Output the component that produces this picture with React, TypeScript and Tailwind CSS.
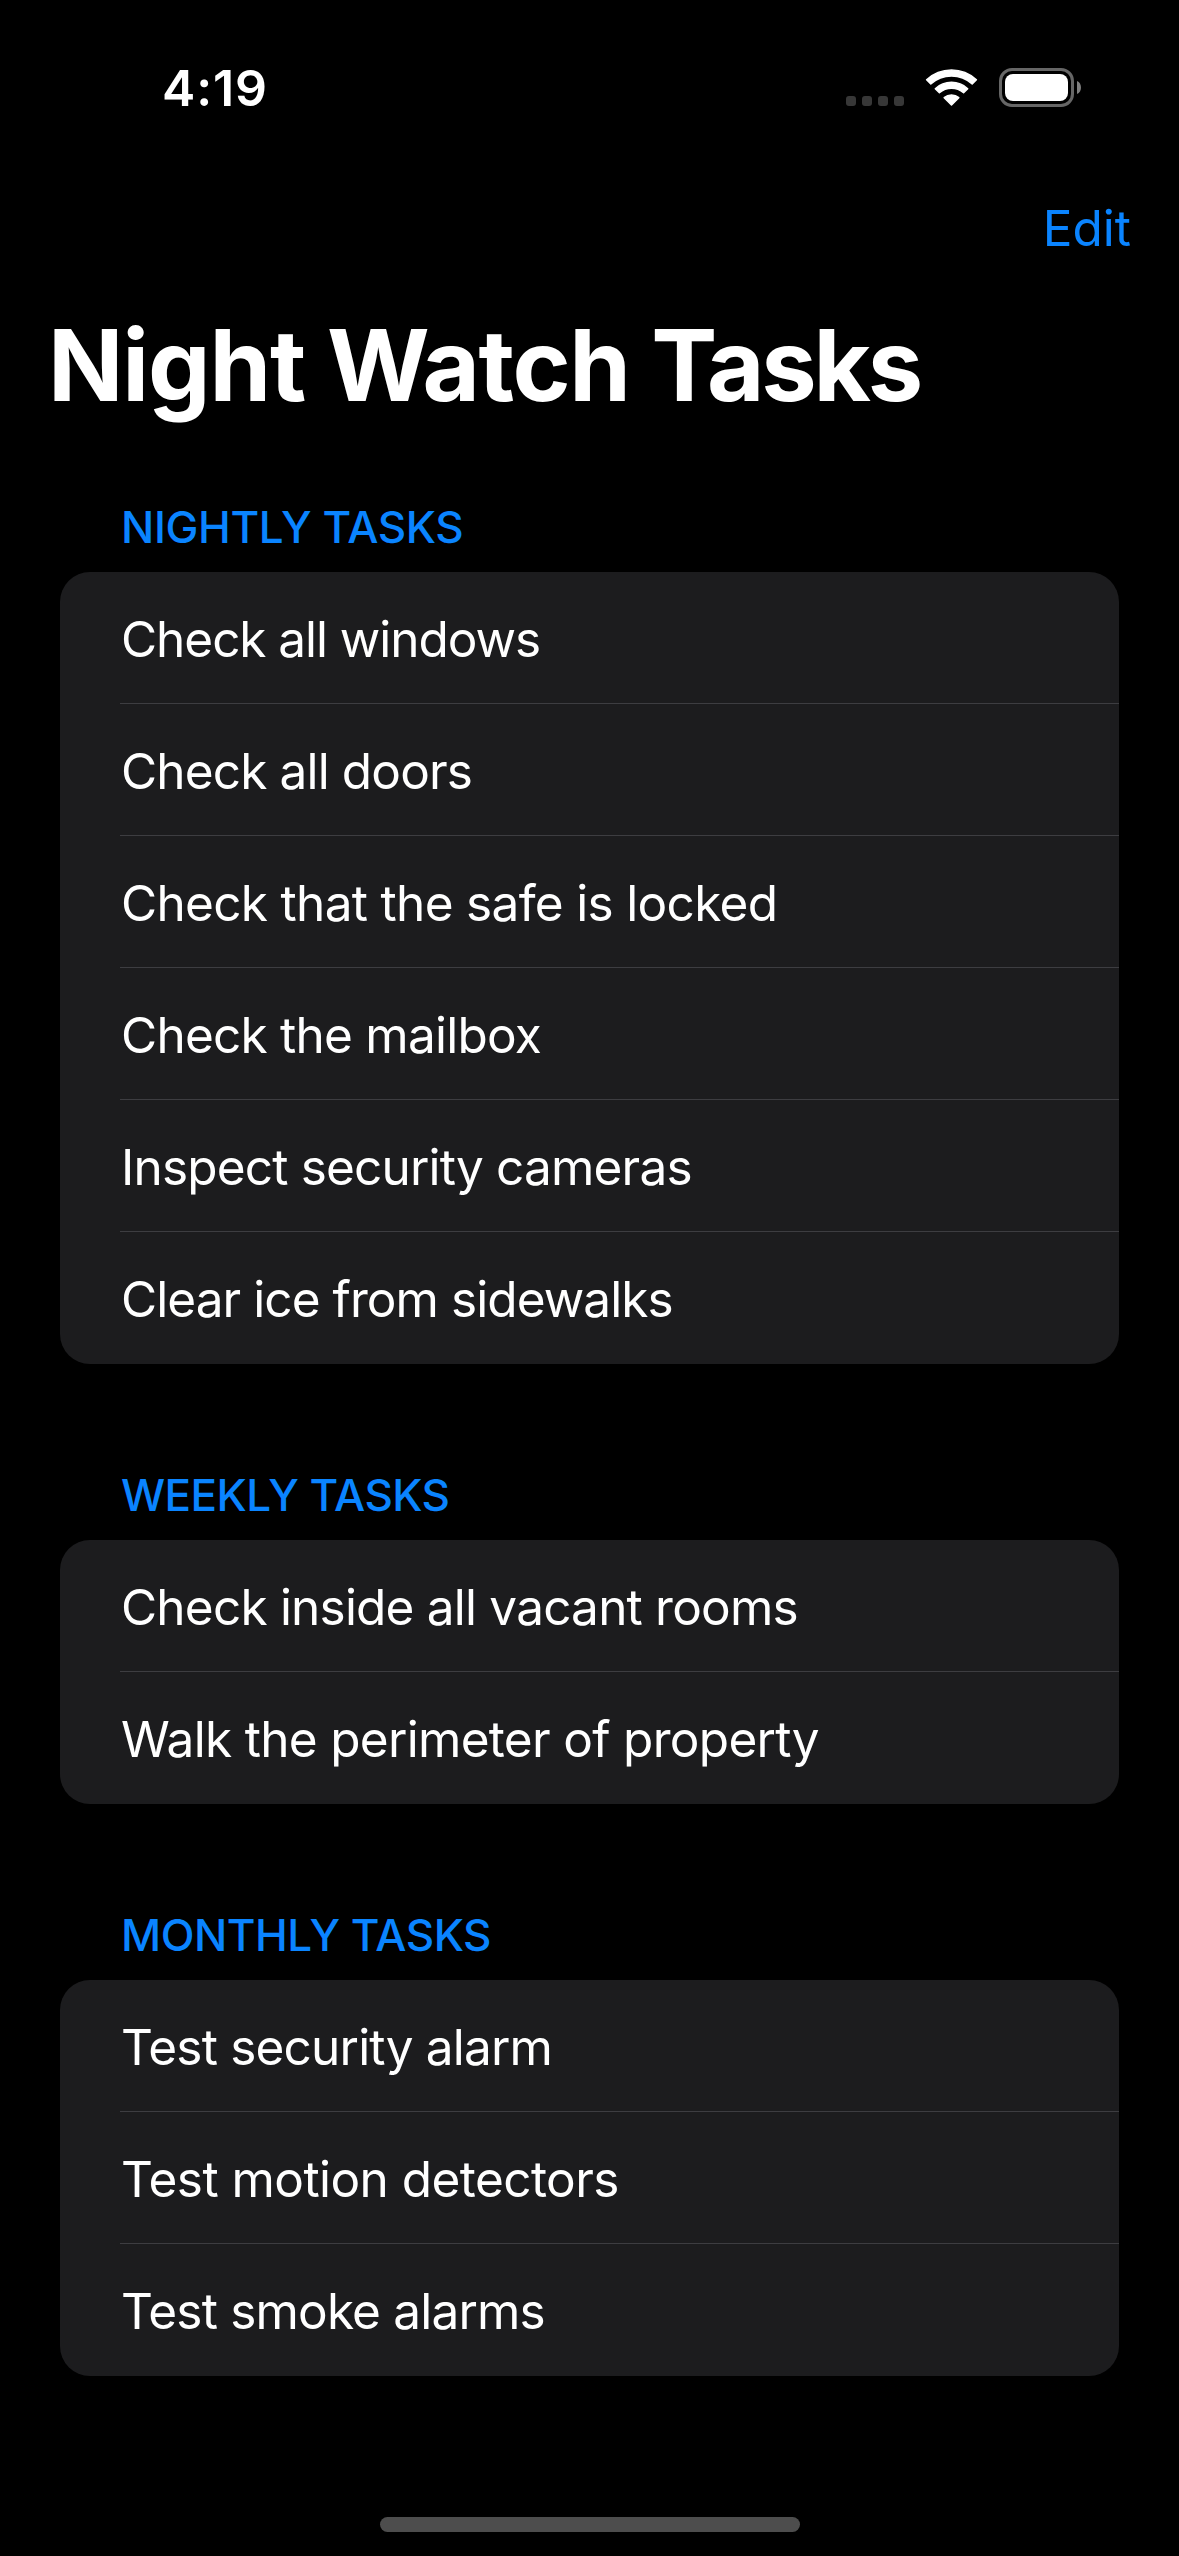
type Task = { name: string; tracking: string };
type Section = { title: string; tracking: string; tasks: Task[] };

const sections: Section[] = [
  {
    title: 'NIGHTLY TASKS',
    tracking: 'tracking-[-0.38px]',
    tasks: [
      { name: 'Check all windows', tracking: 'tracking-[-1.05px]' },
      { name: 'Check all doors', tracking: 'tracking-[-0.85px]' },
      { name: 'Check that the safe is locked', tracking: 'tracking-[-0.68px]' },
      { name: 'Check the mailbox', tracking: 'tracking-[-0.76px]' },
      { name: 'Inspect security cameras', tracking: 'tracking-[-0.82px]' },
      { name: 'Clear ice from sidewalks', tracking: 'tracking-[-0.93px]' },
    ],
  },
  {
    title: 'WEEKLY TASKS',
    tracking: 'tracking-[-0.55px]',
    tasks: [
      { name: 'Check inside all vacant rooms', tracking: 'tracking-[-0.79px]' },
      { name: 'Walk the perimeter of property', tracking: 'tracking-[-0.69px]' },
    ],
  },
  {
    title: 'MONTHLY TASKS',
    tracking: 'tracking-[-0.48px]',
    tasks: [
      { name: 'Test security alarm', tracking: 'tracking-[-0.8px]' },
      { name: 'Test motion detectors', tracking: 'tracking-[-0.55px]' },
      { name: 'Test smoke alarms', tracking: 'tracking-[-0.81px]' },
    ],
  },
];

function StatusIcons() {
  return (
    <svg width="236" height="60" viewBox="845 58 236 60" aria-hidden="true">
      <g fill="#373737">
        <rect x="846" y="96" width="10" height="10" rx="3" />
        <rect x="862" y="96" width="10" height="10" rx="3" />
        <rect x="878" y="96" width="10" height="10" rx="3" />
        <rect x="894" y="96" width="10" height="10" rx="3" />
      </g>
      <g transform="translate(951.5 106)" fill="#fff" stroke="#fff" strokeWidth="1.5" strokeLinejoin="round">
        <path d="M-24.9 -26.2A36.5 36.5 0 0 1 24.9 -26.2L20.7 -22A30.8 30.8 0 0 0 -20.7 -22Z" />
        <path d="M-16.2 -17.3A23.7 23.7 0 0 1 16.2 -17.3L12.1 -13.2A18 18 0 0 0 -12.1 -13.2Z" />
        <path d="M-7.3 -8.4A11.3 11.3 0 0 1 7.3 -8.4L0 -1Z" />
      </g>
      <rect x="1000.5" y="69.5" width="72" height="36" rx="11.5" fill="none" stroke="#666" strokeWidth="3" />
      <rect x="1005" y="74" width="63" height="27" rx="8" fill="#fff" />
      <path d="M1077 81C1082.3 83 1082.3 92 1077 94Z" fill="#808080" />
    </svg>
  );
}

export default function App() {
  return (
    <div className="flex h-[2556px] w-[1179px] flex-col bg-black font-['Inter',sans-serif] text-white">
      <header className="flex h-[177px] items-start justify-between pt-[58px] pr-[98px] pl-[162px]">
        <span className="text-[50px] leading-[60px] font-semibold tracking-[0.9px]">4:19</span>
        <StatusIcons />
      </header>
      <nav className="flex h-[128px] justify-end pt-[21px] pr-[48px]">
        <button className="h-[60px] text-[49.5px] leading-[60px] text-[#0a84ff]">Edit</button>
      </nav>
      <h1 className="h-[124px] pl-[48px] text-[99px] leading-[120px] font-bold tracking-[-1.76px] whitespace-nowrap">
        <span className="tracking-[-1.1px]">Night</span> <span className="tracking-[-1.4px]">Watch</span>{' '}
        <span className="tracking-[-3.2px]">Tasks</span>
      </h1>
      <main className="flex flex-1 flex-col gap-[99px] px-[60px] pt-[66px]">
        {sections.map((section) => (
          <section key={section.title}>
            <h2
              className={`h-[77px] pt-[5px] pl-[61px] text-[44px] leading-[54px] font-medium text-[#0a84ff] ${section.tracking}`}
            >
              {section.title}
            </h2>
            <ul className="overflow-hidden rounded-[30px] bg-[#1c1c1e] pl-[60px]">
              {section.tasks.map((task) => (
                <li
                  key={task.name}
                  className={`h-[132px] border-b border-[#3d3d41] pl-px text-[49.5px] leading-[134px] whitespace-nowrap last:border-0 ${task.tracking}`}
                >
                  {task.name}
                </li>
              ))}
            </ul>
          </section>
        ))}
      </main>
      <footer className="flex justify-center pb-[24px]">
        <div className="h-[15px] w-[420px] rounded-full bg-[#4d4d4d]" />
      </footer>
    </div>
  );
}
